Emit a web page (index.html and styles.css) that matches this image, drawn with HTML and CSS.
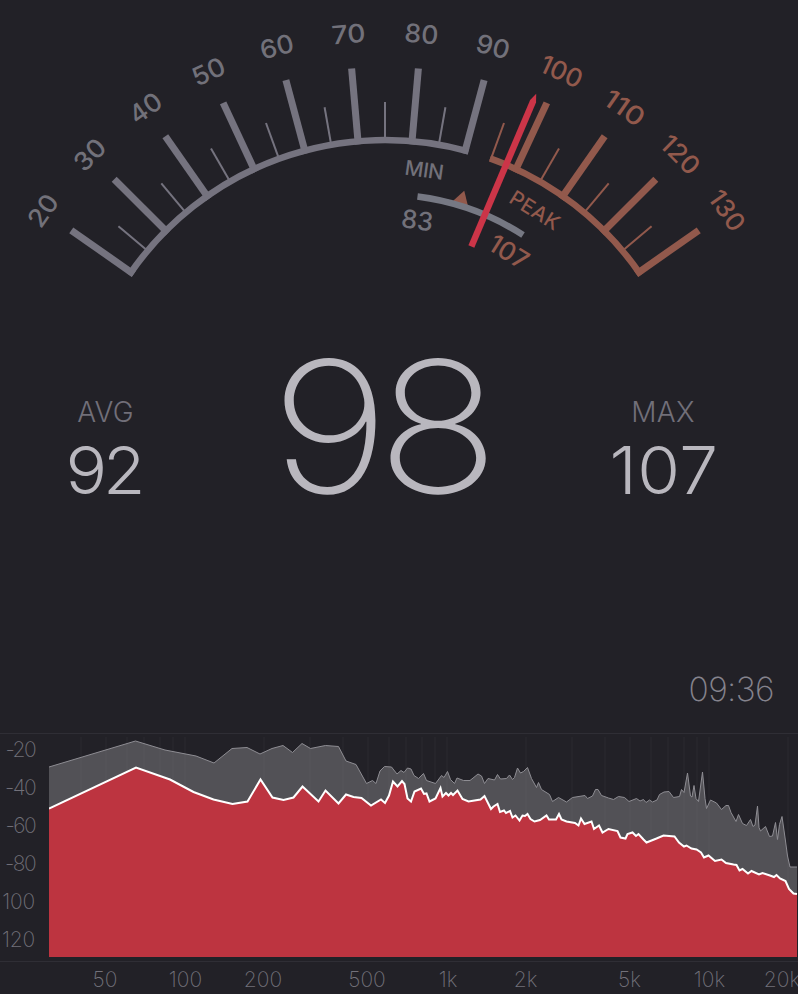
FILE: index.html
```html
<!DOCTYPE html>
<html lang="en">

<head>
  <meta charset="UTF-8">
  <meta name="viewport" content="width=device-width, initial-scale=1.0">
  <title>Sound meter</title>
  <link rel="stylesheet" href="styles.css">
</head>

<body>
  <div class="meter">
    <svg class="gauge" viewBox="0 0 798 320">
      <g class="dial" transform="translate(385 450)">
        <g id="ticks"></g>
        <path class="arc" id="arcLow" />
        <path class="arc arc-hot" id="arcHigh" />
        <path class="hot-fill" d="M-9 -256 L0 -271 L9 -256 Z" transform="rotate(17)" />
        <path class="arc arc-range" id="arcRange" />
        <g id="labels"></g>
        <path class="needle" d="M-3.2 -221 V-379 L0 -387 L3.2 -379 V-221 Z" transform="rotate(23)" />
      </g>
    </svg>

    <div class="readouts">
      <div class="readout">
        <div class="name">AVG</div>
        <div class="value">92</div>
      </div>
      <div class="current">98</div>
      <div class="readout">
        <div class="name">MAX</div>
        <div class="value value-max">107</div>
      </div>
    </div>

    <div class="time">09:36</div>

    <div class="spectrum">
      <div class="levels">
        <span class="neg">-20</span>
        <span class="neg">-40</span>
        <span class="neg">-60</span>
        <span class="neg">-80</span>
        <span>100</span>
        <span>120</span>
      </div>
      <svg class="plot" viewBox="49 734 749 227">
        <path class="peak" id="peak" />
        <path class="peak-line" id="peakLine" />
        <g id="grid"></g>
        <path class="live" id="live" />
        <path class="live-line" id="liveLine" />
      </svg>
    </div>
    <svg class="freqs" viewBox="0 962 798 32" id="freqs"></svg>
  </div>

  <script>
    const NS = "http://www.w3.org/2000/svg";

    function add(parent, name, attrs, text) {
      let el = document.createElementNS(NS, name);
      for (let key in attrs) {
        el.setAttribute(key, attrs[key]);
      }
      if (text) el.textContent = text;
      document.getElementById(parent).appendChild(el);
    }

    // point on the dial, 0 degrees is straight up
    function polar(r, deg) {
      let a = deg * Math.PI / 180;
      return (r * Math.sin(a)).toFixed(2) + " " + (-r * Math.cos(a)).toFixed(2);
    }

    function arc(id, r, from, to) {
      document.getElementById(id).setAttribute("d", `M${polar(r, from)} A${r} ${r} 0 0 1 ${polar(r, to)}`);
    }

    arc("arcLow", 310, -55.6, 15.6);
    arc("arcHigh", 310, 19.8, 55.6);
    arc("arcRange", 255.5, 7.3, 32.7);

    // ticks: one degree per dB, 75 dB is at the top
    for (let db = 20; db <= 130; db += 5) {
      let major = db % 10 === 0;
      let hot = db >= 95 ? " hot" : "";
      add("ticks", "line", {
        class: (major ? "tick" : "tick minor") + hot,
        x1: 0, y1: major ? -306.8 : -308, x2: 0, y2: major ? -383 : -348,
        transform: `rotate(${db - 75})`
      });
      if (major) {
        add("labels", "text", {
          class: "num" + hot, x: 0, y: -408.5,
          textLength: db < 100 ? 34 : 44,
          lengthAdjust: "spacingAndGlyphs",
          transform: `rotate(${db - 75})`
        }, String(db));
      }
    }
    add("labels", "text", { class: "word", x: 0, y: -275.5, textLength: 39, transform: "rotate(8)" }, "MIN");
    add("labels", "text", { class: "word hot", x: 0, y: -275.5, textLength: 55, transform: "rotate(32)" }, "PEAK");
    add("labels", "text", { class: "num", x: 0, y: -223, textLength: 32, lengthAdjust: "spacingAndGlyphs", transform: "rotate(8)" }, "83");
    add("labels", "text", { class: "num hot", x: 0, y: -224.5, textLength: 42, lengthAdjust: "spacingAndGlyphs", transform: "rotate(32)" }, "107");

    // spectrum, log frequency scale
    function freqX(f) {
      return 185 + 262 * Math.log10(f / 100);
    }

    for (let decade = 10; decade <= 10000; decade *= 10) {
      for (let i = 1; i < 10; i++) {
        let x = Math.round(freqX(decade * i));
        if (x > 49 && x < 798) {
          add("grid", "line", { class: "grid-line", x1: x, x2: x, y1: 737, y2: 957 });
        }
      }
    }

    const freqLabels = [[105, "50"], [185.5, "100"], [263, "200"], [367, "500"], [448, "1k"], [525.5, "2k"], [629.5, "5k"], [709.5, "10k"], [782, "20k"]];
    for (let [x, name] of freqLabels) {
      add("freqs", "text", { class: "freq", x: x, y: 987 }, name);
    }

    const peak = "49 767 135.5 741 165 750 196 756 214 763 232 748.5 247 747.5 260 754 272 748.5 283 745.5 292.5 752.5 302 743.5 310.5 748.5 325.5 745.5 338.5 746.5 346 761 356 764.5 366.5 783.5 372.5 780.5 376 783.5 380 771 384.5 766.5 391.5 767 397 774 401 770.5 404 772.5 407.5 768 411 769 414 775.5 418.5 778.5 423.5 773.5 426.5 780.5 435.5 783.5 441.5 775.5 444 777.5 447.5 771.5 450.5 779.5 454.5 783.5 457 778 463.5 780.5 470 780.5 478 774 481.5 776 484.5 783.5 488 778.5 494.5 780 497.5 774.5 500.5 779 506.5 778.5 509.5 775 512.5 779.5 514.5 777.5 517.5 768 520.5 773 523.5 771.5 527.5 767.5 531.5 778.5 536.5 787.5 538.5 782.5 541.5 789.5 549.5 794.5 552.5 801.5 558.5 797.5 566.5 802 572.5 797.5 585 795.5 587.5 798.5 592.5 796 595.5 789.5 598 789.5 601.5 795.5 608.5 798 613.5 799.5 618.5 796.5 624.5 797.5 629 801.5 636.5 798.5 640 801 643.5 799.5 646 802.5 649.5 800 652.5 802 657 800 659.5 794.5 664 792 669 791.5 673.5 797.5 679.5 796.5 681.5 789.5 684 792.5 687.5 773 690.5 796 692 797 694 785.5 696 798.5 698.5 801.5 702.5 772 705 798.5 706.5 808.5 710.5 800 716.5 803 721.5 809.5 726 805.5 728.5 805.5 731 812.5 736 821.5 738.5 814.5 742.5 823.5 746.5 825.5 750.5 819.5 753 826.5 755 825 757.5 806 759 827.5 760.5 831 765.5 826.5 769.5 836.5 772.5 836 775.5 822.5 777.5 839.5 779.5 824.5 782 816.5 785.5 841 787.5 856 790 867 797 867";
    const live = "49 808.5 136 767.5 170 779.5 193.5 792 213.5 799.5 232.5 804 247.5 801.5 260.5 779.5 272.5 797.5 283.5 800 293.5 797.5 302.5 786.5 318.5 801.5 325.5 790.5 338.5 803.5 346 794.5 353.5 797 361.5 798 371 805.5 381 799.5 385 803 389 795.5 393 781.5 397.5 786.5 402 781 404.5 784 407.5 798.5 411 801.5 414.5 791.5 421 788.5 424 794 426.5 793.5 429.5 801.5 435.5 798.5 440.5 788 442.5 796.5 446 793 448.5 795.5 451 793 453 795 457.5 790.5 462.5 799 468.5 801.5 480.5 799.5 484.5 796 491 809 493.5 806.5 497.5 804 500 812 504 810.5 506 813 510 811 512.5 817.5 515.5 815.5 519.5 820.5 522.5 815.5 525 816 527.5 814 530.5 819 534.5 821.5 540 820 546.5 815.5 549 819.5 556 819.5 559 814 561.5 819.5 566.5 821.5 575 823 578.5 825.5 581 818.5 584.5 824 591.5 821.5 594 829 599 825.5 602.5 832.5 608.5 829 617.5 831 620.5 837.5 625.5 838.5 627.5 834 632.5 832.5 636 836 638.5 834 643.5 839.5 646.5 842.5 656.5 838.5 663.5 835.5 674.5 836.5 679 842.5 684 846.5 686.5 845.5 691.5 848.5 696.5 849.5 701 852.5 704 857.5 708.5 855.5 715 861 721.5 859.5 726 863 733.5 864.5 736.5 865 739.5 870.5 742.5 869 748 873.5 751.5 871 759 874.5 762.5 873 770 875.5 774 877 776.5 875 780 878.5 785.5 881 789 889 793.5 893.5 797 894";
    document.getElementById("peak").setAttribute("d", `M49 957 L${peak} V957 Z`);
    document.getElementById("peakLine").setAttribute("d", `M${peak}`);
    document.getElementById("live").setAttribute("d", `M49 957 L${live} V957 Z`);
    document.getElementById("liveLine").setAttribute("d", `M${live}`);
  </script>
</body>

</html>
```
FILE: styles.css
```css
body {
  margin: 0;
  background-color: #222127;
  font-family: Inter, "Liberation Sans", sans-serif;
}

.meter {
  display: flex;
  flex-direction: column;
  width: 798px;
  height: 994px;
  overflow: hidden;
}

.gauge {
  width: 798px;
  height: 320px;
}

.arc {
  fill: none;
  stroke: #75737f;
  stroke-width: 6.5;
}

.arc-hot {
  stroke: #92594c;
}

.arc-range {
  stroke: #767883;
}

.hot-fill {
  fill: #92594c;
}

.tick {
  stroke: #75737f;
  stroke-width: 7;
}

.minor {
  stroke-width: 2;
}

.tick.hot {
  stroke: #92594c;
}

.num,
.word {
  font-size: 25.5px;
  font-weight: 500;
  text-anchor: middle;
  fill: #72717a;
}

.word {
  font-size: 20.5px;
  font-weight: 450;
}

.num.hot,
.word.hot {
  fill: #92594c;
}

.needle {
  fill: #cc3548;
}

.readouts {
  display: grid;
  grid-template-columns: 211px 348px 208px;
  height: 210px;
  color: #b9b7be;
}

.readout {
  padding-top: 76px;
  text-align: center;
}

.name {
  font-size: 28px;
  font-weight: 300;
  line-height: 32px;
  letter-spacing: 0.3px;
  color: #716f79;
}

.value {
  font-size: 66px;
  font-weight: 270;
  line-height: 84px;
  letter-spacing: -4px;
  transform: translateX(-2px) scaleX(1.05);
}

.value-max {
  letter-spacing: 0.5px;
  transform: translateX(1px) scaleX(1.05);
}

.current {
  font-size: 183px;
  font-weight: 165;
  line-height: 214px;
  letter-spacing: -11px;
  text-align: center;
  transform: translateX(-6px) scaleX(1.11);
}

.time {
  padding: 142px 24px 0 0;
  height: 61px;
  font-size: 33.5px;
  font-weight: 200;
  line-height: 34px;
  letter-spacing: -0.6px;
  text-align: right;
  color: #85838d;
}

.spectrum {
  display: flex;
  border-top: 1px solid #2f2e35;
  border-bottom: 1px solid #2f2e35;
}

.levels {
  display: flex;
  flex-direction: column;
  width: 35px;
  padding-right: 14px;
  text-align: right;
  font-size: 21px;
  font-weight: 200;
  line-height: 38px;
  letter-spacing: -0.2px;
  color: #72717a;
  margin-top: -3px;
  height: 230px;
}

.neg {
  letter-spacing: -1.6px;
}

.plot {
  width: 749px;
  height: 227px;
}

.peak {
  fill: #525156;
}

.peak-line {
  fill: none;
  stroke: #8e8d93;
  stroke-width: 1;
}

.grid-line {
  stroke: #8f8e96;
  stroke-opacity: 0.04;
  stroke-width: 2;
}

.live {
  fill: #bd3440;
}

.live-line {
  fill: none;
  stroke: #fff;
  stroke-width: 2;
}

.freqs {
  width: 798px;
  height: 32px;
}

.freq {
  font-size: 21px;
  font-weight: 200;
  text-anchor: middle;
  fill: #72717a;
}
```
